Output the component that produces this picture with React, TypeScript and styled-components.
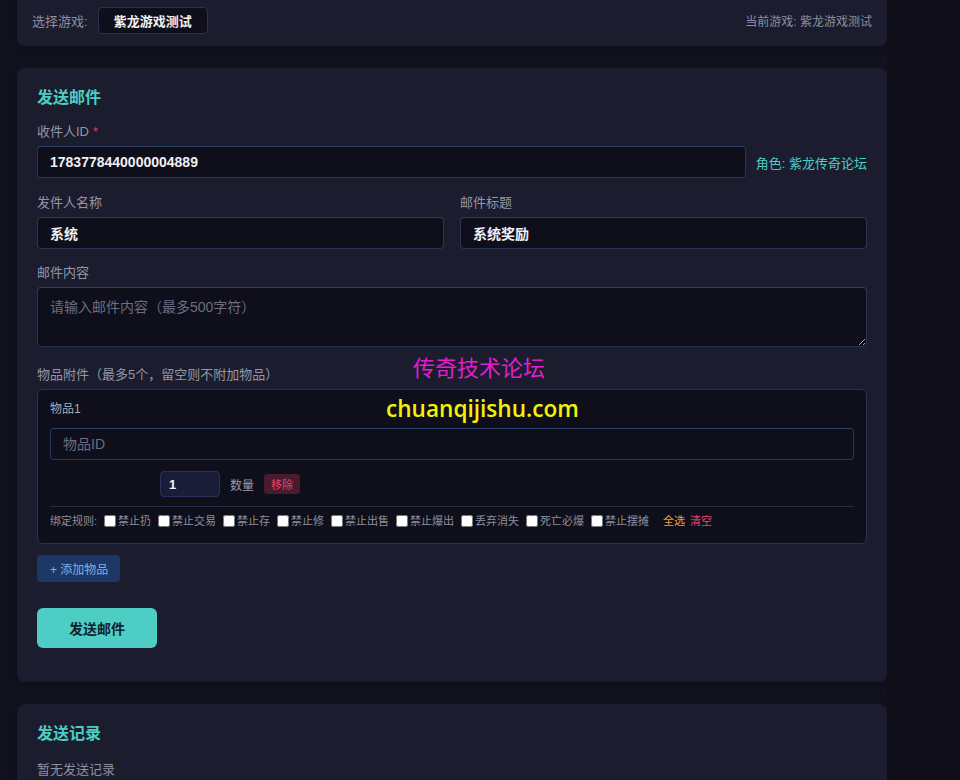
import styled, { createGlobalStyle } from "styled-components";

const GlobalStyle = createGlobalStyle`
  * {
    box-sizing: border-box;
  }
  body {
    margin: 0;
    background: #0f0e18;
    font-family: "Liberation Sans", "Noto Sans CJK SC", sans-serif;
    color: #d8d8e0;
    overflow: hidden;
  }
`;

const Page = styled.div`
  position: relative;
  display: flex;
  min-height: 780px;
`;

const Main = styled.main`
  width: 887px;
  background: #12121e;
  padding-left: 17px;
  display: flex;
  flex-direction: column;
  gap: 22px;
`;

const Side = styled.aside`
  flex: 1;
  background: #0f0e18;
`;

const Card = styled.section<{ $top?: boolean }>`
  background: #1b1c2e;
  border-radius: 8px;
  padding: ${(p) => (p.$top ? "12px 15px" : "20px 20px 34px")};
  margin-top: ${(p) => (p.$top ? "-5px" : "0")};
  box-shadow: 0 2px 6px rgba(0, 0, 0, 0.25);
`;

const GameBar = styled.div`
  display: flex;
  align-items: center;
  gap: 10px;
  font-size: 12px;
  color: #8e8fa0;
`;

const GameLabel = styled.span`
  font-size: 13px;
`;

const GameButton = styled.button`
  height: 27px;
  padding: 0 15px;
  background: #0f0f1b;
  border: 1px solid #2c3152;
  border-radius: 4px;
  color: #f2f2f6;
  font-family: inherit;
  font-size: 13px;
  font-weight: 700;
`;

const CurrentGame = styled.span`
  margin-left: auto;
`;

const Title = styled.h2`
  margin: 0 0 15px;
  font-size: 16px;
  line-height: 20px;
  font-weight: 700;
  color: #4ecdc4;
`;

const Field = styled.div<{ $gap?: number }>`
  display: flex;
  flex-direction: column;
  flex: 1;
  margin-bottom: ${(p) => p.$gap ?? 16}px;
`;

const Label = styled.label`
  display: block;
  font-size: 13px;
  line-height: 18px;
  color: #9596a6;
  margin-bottom: 5px;
`;

const Required = styled.span`
  color: #e0405a;
  margin-left: 4px;
`;

const Row = styled.div`
  display: flex;
  align-items: center;
  gap: 16px;
`;

const Input = styled.input`
  width: 100%;
  height: 32px;
  padding: 0 12px;
  background: #0f0f1b;
  border: 1px solid #283456;
  border-top-color: #2d4168;
  border-radius: 4px;
  color: #f0f0f4;
  font-family: inherit;
  font-size: 14px;
  font-weight: 600;
  outline: none;
  &::placeholder {
    color: #6c6d80;
    font-weight: 400;
  }
`;

const RoleHint = styled.span`
  font-size: 13px;
  color: #4ecdc4;
  white-space: nowrap;
  margin-left: -6px;
`;

const TextArea = styled.textarea`
  width: 100%;
  height: 60px;
  padding: 8px 12px;
  background: #0f0f1b;
  border: 1px solid #283456;
  border-top-color: #2d4168;
  border-radius: 4px;
  color: #f0f0f4;
  font-family: inherit;
  font-size: 14px;
  outline: none;
  &::placeholder {
    color: #6c6d80;
  }
`;

const ItemBox = styled.div`
  background: #0f0f1b;
  border: 1px solid #283456;
  border-radius: 6px;
  padding: 12px 12px 14px;
`;

const ItemName = styled.div`
  font-size: 12px;
  line-height: 14px;
  color: #a8a9b6;
  margin-bottom: 12px;
`;

const QtyRow = styled.div`
  display: flex;
  align-items: center;
  gap: 10px;
  margin: 11px 0 0 110px;
  height: 26px;
`;

const QtyInput = styled.input`
  width: 60px;
  height: 26px;
  padding: 0 8px;
  background: #1a1d37;
  border: 1px solid #2a3058;
  border-radius: 4px;
  color: #f2f2f6;
  font-family: inherit;
  font-size: 13px;
  font-weight: 700;
  outline: none;
`;

const QtyLabel = styled.span`
  font-size: 12px;
  color: #9a9aa8;
`;

const RemoveButton = styled.button`
  height: 20px;
  padding: 0 7px;
  background: #4a1b2d;
  border: none;
  border-radius: 3px;
  color: #e5456a;
  font-family: inherit;
  font-size: 11px;
`;

const BindRow = styled.div`
  display: flex;
  align-items: center;
  margin-top: 9px;
  padding-top: 6px;
  border-top: 1px solid #2a2d45;
  font-size: 11px;
  line-height: 16px;
  color: #8d8e9e;
`;

const BindOption = styled.label`
  display: flex;
  align-items: center;
  margin-left: 7px;
  input {
    width: 12px;
    height: 12px;
    margin: 0 2px 0 0;
  }
`;

const TextAction = styled.span<{ $color: string; $gap: number }>`
  color: ${(p) => p.$color};
  margin-left: ${(p) => p.$gap}px;
`;

const AddButton = styled.button`
  margin-top: 11px;
  height: 27px;
  padding: 0 12px 0 13px;
  background: #1d3766;
  border: none;
  border-radius: 4px;
  color: #7fb2e4;
  font-family: inherit;
  font-size: 12px;
`;

const SendButton = styled.button`
  display: block;
  margin-top: 26px;
  width: 120px;
  height: 40px;
  background: #4ecdc4;
  border: none;
  border-radius: 6px;
  color: #12222e;
  font-family: inherit;
  font-size: 14px;
  font-weight: 700;
`;

const Empty = styled.div`
  font-size: 13px;
  color: #8e8fa0;
`;

const Stamp = styled.div<{ $top: number; $left: number; $color: string }>`
  position: absolute;
  top: ${(p) => p.$top}px;
  left: ${(p) => p.$left}px;
  color: ${(p) => p.$color};
  font-size: 22px;
  line-height: 26px;
  pointer-events: none;
`;

const StampUrl = styled(Stamp)`
  font-family: "Open Sans", "Noto Sans", sans-serif;
  font-size: 22.6px;
  font-weight: 600;
`;

const bindRules = [
  "禁止扔",
  "禁止交易",
  "禁止存",
  "禁止修",
  "禁止出售",
  "禁止爆出",
  "丢弃消失",
  "死亡必爆",
  "禁止摆摊",
];

export default function App() {
  return (
    <>
      <GlobalStyle />
      <Page>
        <Main>
          <Card $top>
            <GameBar>
              <GameLabel>选择游戏:</GameLabel>
              <GameButton>紫龙游戏测试</GameButton>
              <CurrentGame>当前游戏: 紫龙游戏测试</CurrentGame>
            </GameBar>
          </Card>

          <Card>
            <Title>发送邮件</Title>
            <Field>
              <Label>
                收件人ID<Required>*</Required>
              </Label>
              <Row>
                <Input defaultValue="1783778440000004889" />
                <RoleHint>角色: 紫龙传奇论坛</RoleHint>
              </Row>
            </Field>
            <Row>
              <Field $gap={15}>
                <Label>发件人名称</Label>
                <Input defaultValue="系统" />
              </Field>
              <Field $gap={15}>
                <Label>邮件标题</Label>
                <Input defaultValue="系统奖励" />
              </Field>
            </Row>
            <Field $gap={19}>
              <Label>邮件内容</Label>
              <TextArea placeholder="请输入邮件内容（最多500字符）" />
            </Field>
            <Label>物品附件（最多5个，留空则不附加物品）</Label>
            <ItemBox>
              <ItemName>物品1</ItemName>
              <Input placeholder="物品ID" />
              <QtyRow>
                <QtyInput defaultValue="1" />
                <QtyLabel>数量</QtyLabel>
                <RemoveButton>移除</RemoveButton>
              </QtyRow>
              <BindRow>
                <span>绑定规则:</span>
                {bindRules.map((rule) => (
                  <BindOption key={rule}>
                    <input type="checkbox" />
                    {rule}
                  </BindOption>
                ))}
                <TextAction $color="#f0a030" $gap={14}>
                  全选
                </TextAction>
                <TextAction $color="#e5456a" $gap={5}>
                  清空
                </TextAction>
              </BindRow>
            </ItemBox>
            <AddButton>+ 添加物品</AddButton>
            <SendButton>发送邮件</SendButton>
          </Card>

          <Card>
            <Title>发送记录</Title>
            <Empty>暂无发送记录</Empty>
          </Card>
        </Main>
        <Side />
        <Stamp $top={356} $left={413} $color="#e51ccf">
          传奇技术论坛
        </Stamp>
        <StampUrl $top={396} $left={386} $color="#f2f205">
          chuanqijishu.com
        </StampUrl>
      </Page>
    </>
  );
}
